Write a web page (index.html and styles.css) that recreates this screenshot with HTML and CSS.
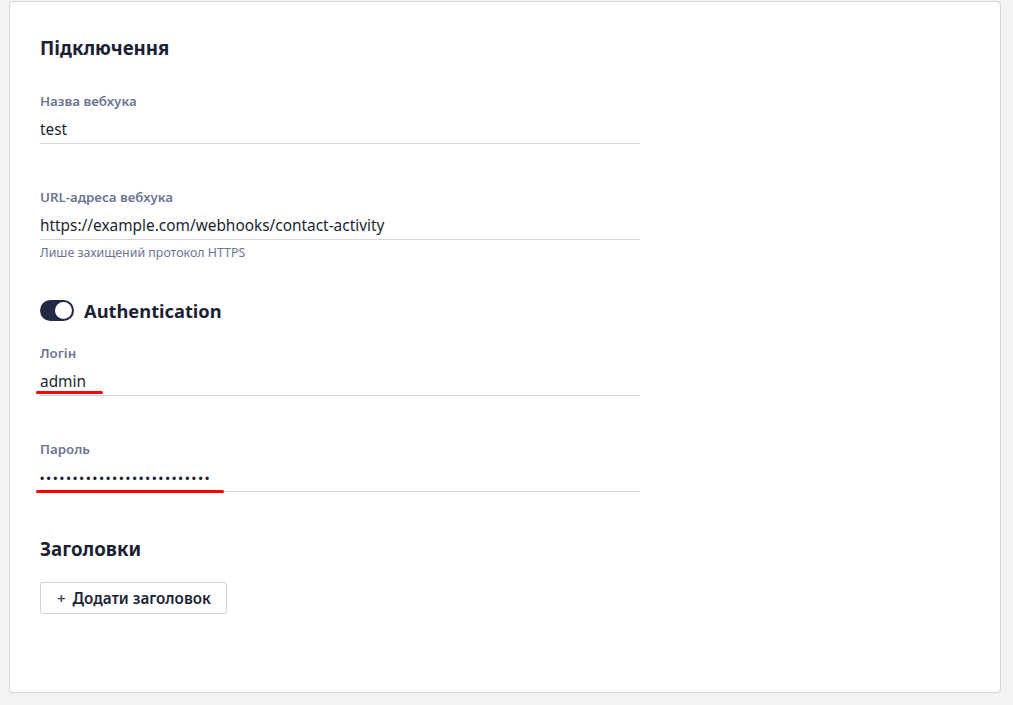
FILE: index.html
```html
<!DOCTYPE html>
<html lang="uk">
<head>
<meta charset="utf-8">
<title>Webhook</title>
<link rel="stylesheet" href="styles.css">
</head>
<body>
<div class="card">
  <h2 class="section-title">Підключення</h2>

  <div class="field">
    <div class="label">Назва вебхука</div>
    <div class="input">test</div>
  </div>

  <div class="field field-hinted">
    <div class="label">URL-адреса вебхука</div>
    <div class="input">https://example.com/webhooks/contact-activity</div>
    <div class="hint">Лише захищений протокол HTTPS</div>
  </div>

  <div class="toggle-row">
    <span class="toggle"><span class="knob"></span></span>
    <span class="toggle-label">Authentication</span>
  </div>

  <div class="field">
    <div class="label">Логін</div>
    <div class="input">admin<span class="mark mark-login"></span></div>
  </div>

  <div class="field">
    <div class="label">Пароль</div>
    <div class="input dots">••••••••••••••••••••••••••<span class="mark mark-pass"></span></div>
  </div>

  <h2 class="section-title headers-title">Заголовки</h2>
  <button class="add-btn"><span class="plus">+</span>Додати заголовок</button>
</div>
</body>
</html>
```
FILE: styles.css
```css
html, body {
  margin: 0;
  padding: 0;
  background: #f3f3f4;
}
body {
  padding: 1px 12px 12px 9px;
  font-family: "Noto Sans", "Liberation Sans", Arial, sans-serif;
  color: #1c1f33;
}
.card {
  box-sizing: border-box;
  width: 992px;
  height: 692px;
  background: #fff;
  border: 1px solid #d3d5de;
  border-radius: 4px;
  padding: 34px 30px 0 30px;
}
.section-title {
  margin: 0;
  font-size: 18.7px;
  line-height: 24px;
  font-weight: 700;
  color: #1c1f33;
}
.field {
  width: 600px;
  margin-top: 33px;
}
.field + .field {
  margin-top: 45px;
}
.label {
  font-size: 13.3px;
  line-height: 16px;
  font-weight: 600;
  color: #6b7590;
  margin-bottom: 10px;
}
.input {
  position: relative;
  height: 20px;
  font-size: 15.4px;
  line-height: 20px;
  padding-top: 1px;
  padding-bottom: 3px;
  border-bottom: 1px solid #d3d5de;
  color: #1c1f33;
}
.dots {
  font-family: "Liberation Sans", Arial, sans-serif;
  letter-spacing: 2.4px;
  font-size: 12px;
  line-height: 22px;
}
.hint {
  margin-top: 5px;
  font-size: 12.4px;
  line-height: 16px;
  color: #6b7590;
}
.toggle-row {
  display: flex;
  align-items: center;
  gap: 10px;
  margin-top: 39px;
  height: 21px;
}
.toggle {
  box-sizing: border-box;
  width: 34px;
  height: 21px;
  border-radius: 11px;
  background: #232a45;
  display: flex;
  align-items: center;
  justify-content: flex-end;
  padding-right: 2px;
}
.knob {
  width: 17px;
  height: 17px;
  border-radius: 50%;
  background: #fff;
}
.toggle-label {
  font-size: 18.3px;
  font-weight: 700;
  line-height: 24px;
  color: #1c1f33;
}
.toggle-row + .field {
  margin-top: 24px;
}
.headers-title {
  margin-top: 45px;
}
.add-btn {
  margin-top: 21px;
  box-sizing: border-box;
  width: 187px;
  height: 32px;
  padding: 0 0 0 16px;
  background: #fff;
  border: 1px solid #d3d5de;
  border-radius: 2px;
  font-family: "Noto Sans", "Liberation Sans", Arial, sans-serif;
  font-size: 15.2px;
  font-weight: 600;
  color: #1c1f33;
  display: flex;
  align-items: center;
}
.plus {
  color: #3d4460;
  margin-right: 7px;
  font-size: 15px;
}
.mark {
  position: absolute;
  left: -4px;
  height: 3px;
  border-radius: 2px;
  background: #ff0000;
}
.mark-login {
  width: 67px;
  bottom: 1px;
}
.mark-pass {
  width: 188px;
  bottom: -2px;
}
```
